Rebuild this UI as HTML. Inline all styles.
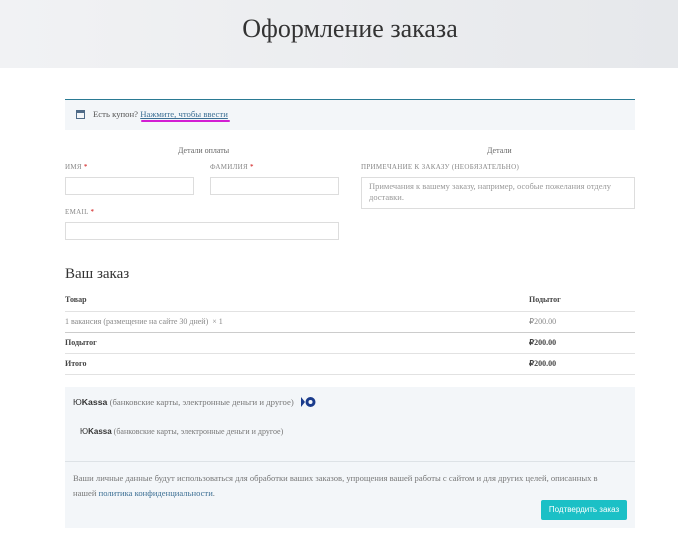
<!DOCTYPE html>
<html><head><meta charset="utf-8"><style>
*{margin:0;padding:0;box-sizing:border-box}
body{width:678px;height:546px;background:#fff;font-family:"Liberation Serif","Noto Serif CJK SC",serif;color:#555;position:relative;overflow:hidden}
.a{position:absolute;white-space:nowrap}
.hdr{position:absolute;left:0;top:0;width:678px;height:68px;background:linear-gradient(90deg,#f1f2f4,#e6e8eb)}
.inp{position:absolute;border:1px solid #ddd;background:#fff}
.lbl{font-size:7px;color:#888;letter-spacing:.3px}
.lbl b{color:#c00;font-weight:normal}
.line{position:absolute;left:65px;width:570px;height:1px;background:#e2e2e2}
.t{font-size:8px}
</style></head><body>
<div class="hdr"></div>
<div class="a" style="left:11px;width:678px;text-align:center;top:14px;font-size:26px;color:#333">Оформление заказа</div>

<div style="position:absolute;left:65px;top:99px;width:570px;height:31px;background:#f3f6f9;border-top:1.5px solid #2a7a93"></div>
<div style="position:absolute;left:76px;top:110px;width:9px;height:9px;border:1.5px solid #4f6b88;border-top-width:3px"></div>
<div class="a" style="left:93px;top:109px;font-size:8.7px;color:#555">Есть купон? <span style="color:#3c6f94;text-decoration:underline">Нажмите, чтобы ввести</span></div>
<div style="position:absolute;left:141px;top:120px;width:89px;height:2px;background:#d31ed3;border-radius:1px"></div>

<div class="a t" style="left:178px;top:146px;color:#666">Детали оплаты</div>
<div class="a t" style="left:487px;top:146px;color:#666">Детали</div>
<div class="a lbl" style="left:65px;top:163px">ИМЯ <b>*</b></div>
<div class="a lbl" style="left:210px;top:163px">ФАМИЛИЯ <b>*</b></div>
<div class="a lbl" style="left:361px;top:163px">ПРИМЕЧАНИЕ К ЗАКАЗУ (НЕОБЯЗАТЕЛЬНО)</div>
<div class="inp" style="left:65px;top:177px;width:129px;height:18px"></div>
<div class="inp" style="left:210px;top:177px;width:129px;height:18px"></div>
<div class="inp" style="left:361px;top:177px;width:274px;height:32px"></div>
<div class="a" style="left:369px;top:181px;font-size:8.5px;color:#999;line-height:11px;white-space:normal;width:262px">Примечания к вашему заказу, например, особые пожелания отделу доставки.</div>
<div class="a lbl" style="left:65px;top:208px">EMAIL <b>*</b></div>
<div class="inp" style="left:65px;top:222px;width:274px;height:18px"></div>

<div class="a" style="left:65px;top:266px;font-size:15px;color:#333">Ваш заказ</div>
<div class="a t" style="left:65px;top:295px;font-weight:bold;color:#444">Товар</div>
<div class="a t" style="left:529px;top:295px;font-weight:bold;color:#444">Подытог</div>
<div class="line" style="top:311px"></div>
<div class="a t" style="left:65px;top:317px;color:#888">1 вакансия (размещение на сайте 30 дней) &nbsp;× 1</div>
<div class="a t" style="left:529px;top:317px;color:#888">₽200.00</div>
<div class="line" style="top:332px;background:#ccc"></div>
<div class="a t" style="left:65px;top:338px;font-weight:bold;color:#444">Подытог</div>
<div class="a t" style="left:529px;top:338px;font-weight:bold;color:#444">₽200.00</div>
<div class="line" style="top:353px"></div>
<div class="a t" style="left:65px;top:359px;font-weight:bold;color:#444">Итого</div>
<div class="a t" style="left:529px;top:359px;font-weight:bold;color:#444">₽200.00</div>
<div class="line" style="top:374px"></div>

<div style="position:absolute;left:65px;top:387px;width:570px;height:141px;background:#f3f6f9"></div>
<div class="a" style="left:73px;top:397px;font-size:8.7px;color:#777"><span style="font-family:'Liberation Sans',sans-serif;color:#333">Ю<b>Kassa</b></span> (банковские карты, электронные деньги и другое)</div>
<svg style="position:absolute;left:300px;top:396px" width="17" height="12" viewBox="0 0 17 12"><path d="M1 1 L5 6 L1 11 Z" fill="#1a3b8c"/><circle cx="10.5" cy="6" r="5" fill="#1a3b8c"/><circle cx="10.5" cy="6" r="2" fill="#f3f6f9"/></svg>
<div class="a" style="left:80px;top:427px;font-size:8px;color:#777"><span style="font-family:'Liberation Sans',sans-serif;color:#333">Ю<b>Kassa</b></span> (банковские карты, электронные деньги и другое)</div>
<div style="position:absolute;left:65px;top:461px;width:570px;height:1px;background:#dde2e6"></div>
<div class="a" style="left:73px;top:471px;font-size:8.6px;color:#777;line-height:15px;white-space:normal;width:548px">Ваши личные данные будут использоваться для обработки ваших заказов, упрощения вашей работы с сайтом и для других целей, описанных в нашей <span style="color:#3c6f94">политика конфиденциальности</span>.</div>
<div class="a" style="left:541px;top:500px;width:86px;height:20px;background:#1bc0c6;border-radius:2px;color:#fff;font-family:'Liberation Sans',sans-serif;font-size:8px;text-align:center;line-height:20px">Подтвердить заказ</div>
</body></html>
